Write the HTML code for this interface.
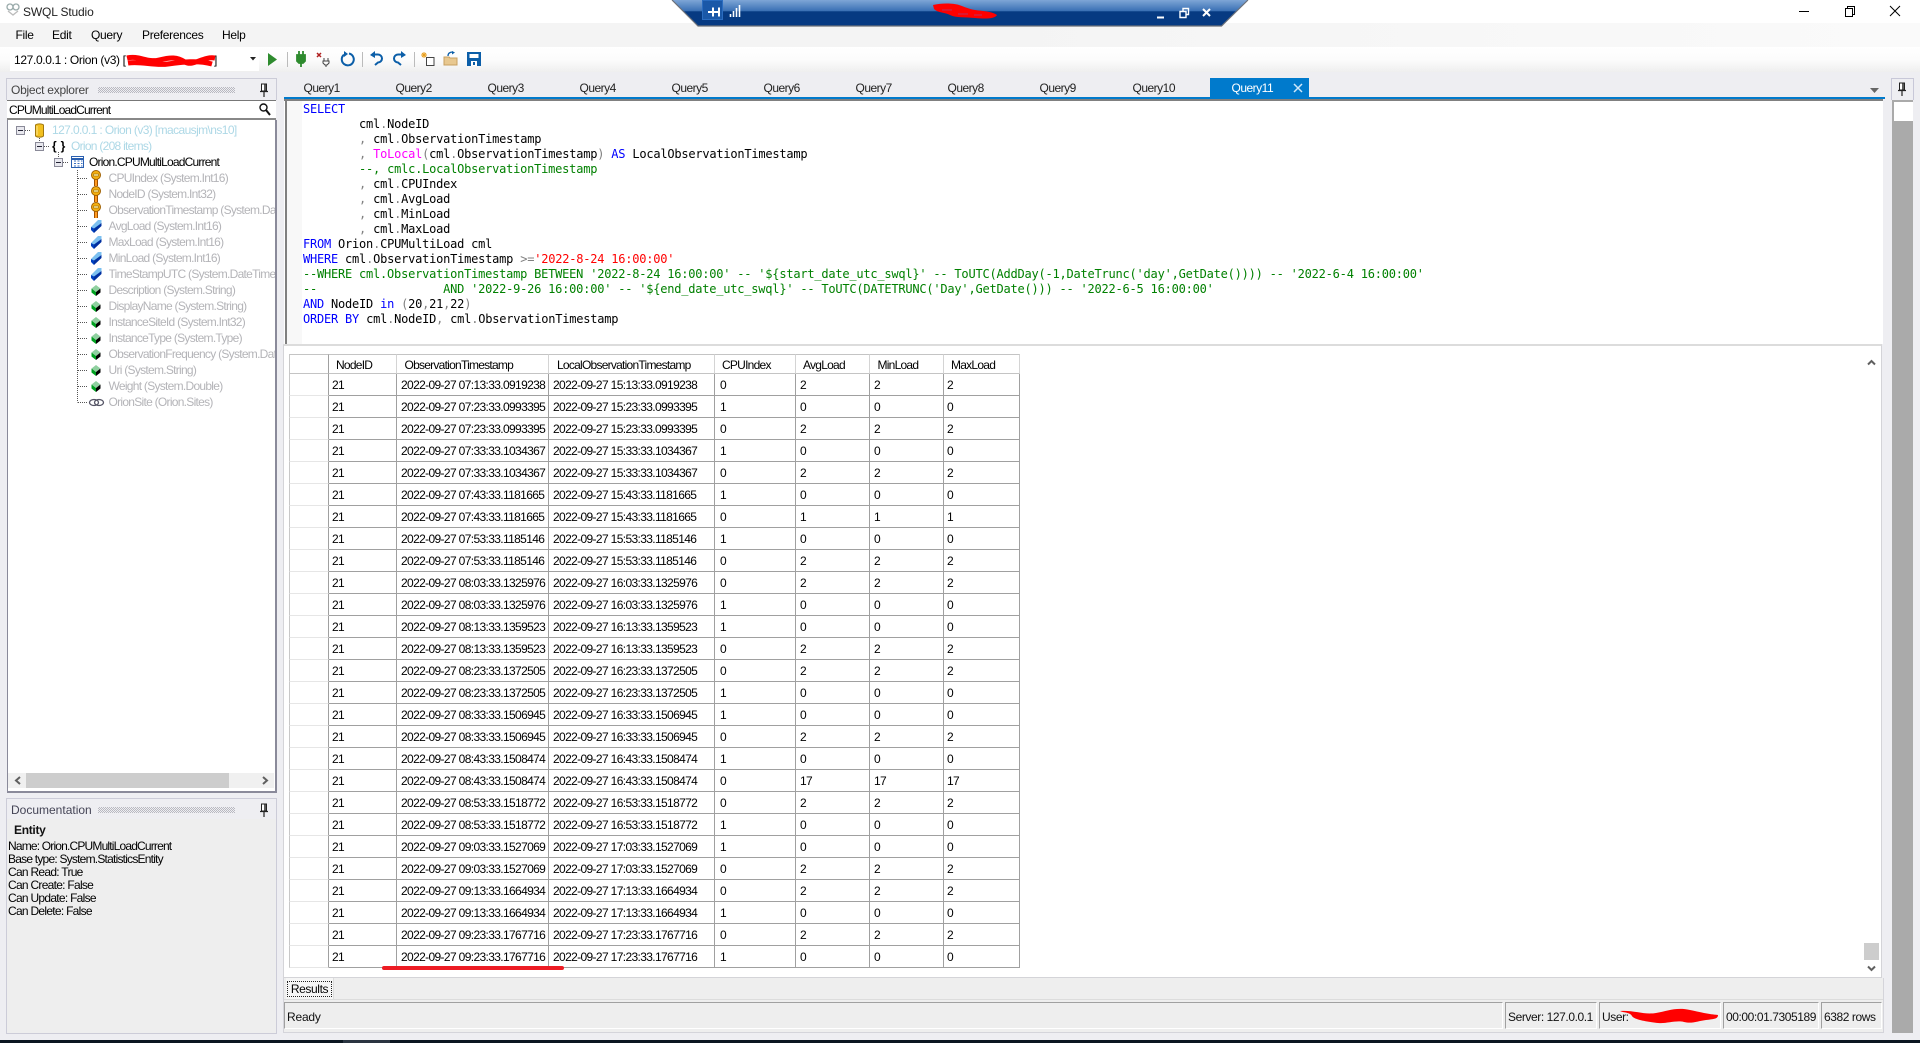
<!DOCTYPE html>
<html><head><meta charset="utf-8"><title>SWQL Studio</title>
<style>
html,body{margin:0;padding:0;width:1920px;height:1043px;overflow:hidden;background:#eeeef2}
body{position:relative;font:12px "Liberation Sans",sans-serif;color:#000;letter-spacing:-.6px}
.a{position:absolute;white-space:nowrap}
.t{position:absolute;white-space:nowrap;line-height:16px;height:16px}
.p{color:#b4b4b8;left:108.5px;letter-spacing:-.72px}
.q{color:#222;top:80px;letter-spacing:-.5px}
.d{left:8px;letter-spacing:-.72px}
svg{position:absolute;overflow:visible}
.grip{position:absolute;height:6px;background-image:repeating-conic-gradient(#b8b8c0 0 25%,transparent 0 50%);background-size:2px 2px}
.code{position:absolute;left:303px;white-space:pre;font:12px/15px "DejaVu Sans Mono",monospace;letter-spacing:-.22px;color:#000}
.code b{font-weight:normal;color:#00f}.code i{font-style:normal;color:#008000}.code u{text-decoration:none;color:#808080}.code s{text-decoration:none;color:#f0f}.code em{font-style:normal;color:#f00}
table{position:absolute;left:289px;top:354px;border-collapse:separate;border-spacing:0;table-layout:fixed;width:731px;background:#fff;letter-spacing:-.64px}
td,th{box-sizing:border-box;height:22px;padding:2px 0 0 4px;border-right:1px solid #a0a0a0;border-bottom:1px solid #a0a0a0;font-weight:normal;text-align:left;white-space:nowrap;overflow:hidden;line-height:19px}
th{height:20px;line-height:16px;padding-top:2px;border-top:1px solid #c4c4c4;border-right:1px solid #d4d4d4;border-bottom:1px solid #c4c4c4;padding-left:8px;letter-spacing:-.75px}
td:first-child,th:first-child{border-left:1px solid #c8c8c8;border-right:1px solid #a0a0a0;border-bottom:1px solid #e6e6e6;padding:0}
th:first-child{border-bottom:1px solid #c4c4c4}
td:nth-child(2){padding-left:3px}td:nth-child(5){padding-left:5px}td:nth-child(8){padding-left:3px}
.sb{position:absolute;top:1002px;height:27px;box-sizing:border-box;border:1px solid;border-color:#a0a0a0 #fff #fff #a0a0a0;padding:1px 0 0 2px;line-height:27px;letter-spacing:-.42px;color:#111}
</style></head>
<body>
<svg width="0" height="0" style="position:absolute"><defs>
<symbol id="key" viewBox="0 0 16 16"><path d="M8 9V16" stroke="#a05000" stroke-width="4"/><path d="M8 9V16" stroke="#ff9a20" stroke-width="2"/><circle cx="8" cy="5" r="4.5" fill="#f5b010" stroke="#a06000"/><rect x="5.5" y="4" width="5" height="2" fill="#fff0a0" stroke="#805000" stroke-width=".5"/></symbol>
<symbol id="col" viewBox="0 0 16 16"><path d="M3 9 10 2h3.500v3l-7.500 7z" fill="#7cc0f0"/><path d="M3 9l3 1.500V15l-3-3z" fill="#0040c0"/><path d="M6 10.500l7.500-5.500v3L6 15z" fill="#0030a0"/></symbol>
<symbol id="prop" viewBox="0 0 16 16"><path d="M8 3l4.500 3.500L8 10 3.500 6.500z" fill="#90d0a0"/><path d="M3.500 6.500 8 10v4l-4.500-3.500z" fill="#00a020"/><path d="M12.500 6.500 8 10v4l4.500-3.500z" fill="#000"/></symbol>
<symbol id="exp" viewBox="0 0 9 9"><rect x=".5" y=".5" width="8" height="8" fill="#e8e8ee" stroke="#8a8a98"/><path d="M2 4.5h5" stroke="#223" stroke-width="1"/></symbol>
<symbol id="pin" viewBox="0 0 10 14"><path d="M2.5 1h5v7h-5z" fill="#fff" stroke="#222"/><path d="M6 1.5v6" stroke="#222" stroke-width="1.5"/><path d="M1 8.5h8M5 8.5V14" stroke="#222" stroke-width="1.2"/></symbol>
</defs></svg>

<!-- title bar -->
<div class="a" style="left:0;top:0;width:1920px;height:23px;background:#fff"></div>
<svg style="left:6px;top:2px" width="14" height="14" viewBox="0 0 14 14"><circle cx="4" cy="5" r="3" fill="none" stroke="#9aa" stroke-width="1.3"/><circle cx="10" cy="5" r="3" fill="none" stroke="#9aa" stroke-width="1.3"/><path d="M2 9l5 4 5-4" fill="none" stroke="#bbb" stroke-width="1.3"/></svg>
<div class="t" style="left:23px;top:4px;font-size:12px;letter-spacing:-.15px;color:#222">SWQL Studio</div>
<svg style="left:1799px;top:4px" width="110" height="14" viewBox="0 0 110 14"><path d="M0 7.500h10" stroke="#000"/><path d="M46.500 4.500h7v8h-7zM48.500 4.500V2.500h7v8h-2" fill="none" stroke="#000"/><path d="M91 2l10 10M101 2 91 12" stroke="#000"/></svg>

<!-- menu bar -->
<div class="a" style="left:0;top:23px;width:1920px;height:24px;background:linear-gradient(90deg,#f4f4f4,#f4f4f4 50%,#fafafa)"></div>
<div class="t" style="left:15.5px;top:27px;letter-spacing:-.3px">File</div>
<div class="t" style="left:52px;top:27px;letter-spacing:-.3px">Edit</div>
<div class="t" style="left:91px;top:27px;letter-spacing:-.3px">Query</div>
<div class="t" style="left:142px;top:27px;letter-spacing:-.3px">Preferences</div>
<div class="t" style="left:222px;top:27px;letter-spacing:-.3px">Help</div>

<!-- toolbar -->
<div class="a" style="left:0;top:47px;width:1920px;height:25px;background:linear-gradient(#fff,#fcfcfc 50%,#efefef)"></div>
<div class="a" style="left:10px;top:48px;width:249px;height:23px;background:#fff"></div>
<div class="t" style="left:14px;top:52px;letter-spacing:-.35px">127.0.0.1 : Orion (v3) [</div>
<div class="t" style="left:214px;top:52px">]</div>
<svg style="left:125px;top:54px" width="92" height="14" viewBox="0 0 92 14"><path d="M2 4C14 1 22 9 34 6S52 3 60 8 78 2 90 4M3 9c14-2 26 3 40 1s30-4 44 0" fill="none" stroke="#f00" stroke-width="5"/></svg>
<svg style="left:250px;top:57px" width="6" height="4"><path d="M0 0h6L3 3.500z" fill="#222"/></svg>
<svg style="left:268px;top:53px" width="10" height="13"><path d="M0 0l9 6.500L0 13z" fill="#2e8b2e"/></svg>
<div class="a" style="left:287px;top:52px;width:1px;height:15px;background:#bbb"></div>
<svg style="left:296px;top:51px" width="10" height="16" viewBox="0 0 10 16"><path d="M3 0v4M7 0v4M1 4h8v6l-2 2H3L1 10zM5 12v4" stroke="#2e8b2e" stroke-width="1.800" fill="#2e8b2e"/></svg>
<svg style="left:317px;top:52px" width="14" height="15" viewBox="0 0 14 15"><path d="M0 1l4 4M4 1 0 5" stroke="#b02020" stroke-width="1.500"/><path d="M7 6v3M11 6v3M6 9h6v2l-2 2H8l-2-2zM9 13v2" stroke="#444" fill="none"/></svg>
<svg style="left:340px;top:51px" width="15" height="16" viewBox="0 0 15 16"><path d="M9 2.500a6 6 0 1 1-5 1.200" fill="none" stroke="#0b5ea8" stroke-width="2"/><path d="M4 0v6l4-3z" fill="#0b5ea8"/></svg>
<div class="a" style="left:362px;top:52px;width:1px;height:15px;background:#bbb"></div>
<svg style="left:370px;top:51px" width="13" height="15" viewBox="0 0 13 15"><path d="M3 3.500h5a4 4 0 0 1 0 8L5 14" fill="none" stroke="#0b5ea8" stroke-width="2"/><path d="M5 0 0 4l5 3z" fill="#0b5ea8"/></svg>
<svg style="left:393px;top:51px" width="13" height="15" viewBox="0 0 13 15"><path d="M10 3.500H5a4 4 0 0 0 0 8L8 14" fill="none" stroke="#0b5ea8" stroke-width="2"/><path d="M8 0l5 4-5 3z" fill="#0b5ea8"/></svg>
<div class="a" style="left:414px;top:52px;width:1px;height:15px;background:#bbb"></div>
<svg style="left:421px;top:52px" width="14" height="14" viewBox="0 0 14 14"><path d="M5.500 5.500H13v8H5.500z" fill="#fff" stroke="#444"/><path d="M3 0v6M0 3h6M1 1l4 4M5 1 1 5" stroke="#e8a020"/></svg>
<svg style="left:444px;top:51px" width="14" height="15" viewBox="0 0 14 15"><path d="M0 6h5l1 1h7v7H0z" fill="#e8c890" stroke="#c8a060"/><path d="M4 5c0-3 2-4 5-4" fill="none" stroke="#0b5ea8" stroke-width="1.300"/><path d="M8 0l3 1.500L8 3.500z" fill="#0b5ea8"/></svg>
<svg style="left:467px;top:52px" width="14" height="14" viewBox="0 0 14 14"><path d="M0 0h14v14H0z" fill="#0b5ea8"/><path d="M2.500 2h9v4h-9z" fill="#fff"/><path d="M4 9h6v5H4z" fill="#fff"/><path d="M6 10h2v3H6z" fill="#0b5ea8"/></svg>

<!-- remote bar -->
<svg style="left:672px;top:0" width="576" height="27" viewBox="0 0 576 27"><defs><linearGradient id="rb" x1="0" x2="0" y1="0" y2="1"><stop offset="0" stop-color="#7ea6d6"/><stop offset=".42" stop-color="#3a70b4"/><stop offset=".45" stop-color="#063a82"/><stop offset="1" stop-color="#063a82"/></linearGradient></defs><path d="M0 0H576L549.500 26H26z" fill="url(#rb)"/><path d="M0 0 26 26H549.500L576 0" fill="none" stroke="#6c7078" stroke-width="1.200"/></svg>
<div class="a" style="left:702px;top:0;width:21px;height:20px;background:#1a58a8;border:1px solid #2a6cc0;box-sizing:border-box"></div>
<svg style="left:708px;top:7px" width="13" height="10"><path d="M0 5h12M5 .5v9M11 .5v9" stroke="#fff" stroke-width="2"/></svg>
<svg style="left:730px;top:5px" width="11" height="12"><path d="M.5 9v3M3.500 6v6M6.500 3v9M9.500 0v12" stroke="#fff" stroke-width="1.600"/></svg>
<svg style="left:930px;top:3px" width="70" height="17" viewBox="0 0 70 17"><path d="M3 2c8-2 20-2 26 0s10 4 16 5 16 1 22 5c-2 4-12 4-22 3S26 15 20 12 8 10 4 6z" fill="#f00"/><path d="M12 7h10M28 11h10M44 12h8" stroke="#b83060"/></svg>
<svg style="left:1157px;top:8px" width="60" height="12"><path d="M0 9.500h7" stroke="#fff" stroke-width="2"/><path d="M23 3.500h6v6h-6zM26 3V.500h5.500v6H29" fill="none" stroke="#fff" stroke-width="1.400"/><path d="M46 1l7 7M53 1l-7 7" stroke="#fff" stroke-width="2"/></svg>

<!-- object explorer -->
<div class="a" style="left:6px;top:78px;width:271px;height:22px;border:1px solid #ccccd8;border-bottom:0;box-sizing:border-box;background:#eeeef2"></div>
<div class="t" style="left:11px;top:82px;letter-spacing:-.25px;color:#444">Object explorer</div>
<div class="grip" style="left:98px;top:87px;width:137px"></div>
<svg style="left:259px;top:83px" width="10" height="14"><use href="#pin"/></svg>
<div class="a" style="left:7px;top:100px;width:269px;height:20px;background:#fff;border-top:1px solid #777;border-bottom:2px solid #888;box-sizing:border-box"></div>
<div class="t" style="left:9px;top:102px;letter-spacing:-.85px">CPUMultiLoadCurrent</div>
<svg style="left:259px;top:103px" width="12" height="13"><circle cx="4.500" cy="4.500" r="3.500" fill="#fff" stroke="#111" stroke-width="1.400"/><path d="M7 7l4 5" stroke="#111" stroke-width="2"/></svg>
<div class="a" style="left:7px;top:120px;width:270px;height:673px;background:#fff;border:solid #8a8a9a;border-width:0 2px 2px 1px;box-sizing:border-box"></div>

<!-- tree lines -->
<svg style="left:0;top:0" width="300" height="420" stroke="#555" stroke-dasharray="1 1" fill="none">
<path d="M25 130.500h6M44 146.500h5M63 162.500h5M39.500 136v6M58.500 152v6M77.500 170V402.500M78 178.500h10M78 194.500h10M78 210.500h10M78 226.500h10M78 242.500h10M78 258.500h10M78 274.500h10M78 290.500h10M78 306.500h10M78 322.500h10M78 338.500h10M78 354.500h10M78 370.500h10M78 386.500h10M78 402.500h10"/></svg>
<svg style="left:16px;top:126px" width="9" height="9"><use href="#exp"/></svg>
<svg style="left:35px;top:142px" width="9" height="9"><use href="#exp"/></svg>
<svg style="left:54px;top:158px" width="9" height="9"><use href="#exp"/></svg>
<svg style="left:35px;top:123px" width="9" height="15"><path d="M.5 2C2 .5 7 .5 8.500 2v11c-1.500 1.500-6.500 1.500-8 0z" fill="#f2c020" stroke="#a07810"/><path d="M2 3v9" stroke="#ffe890"/></svg>
<div class="t" style="left:52px;top:122px;color:#add8e6">127.0.0.1 : Orion (v3) [macausjm\ns10]</div>
<div class="t" style="left:52px;top:138px;font-size:12px;font-weight:bold;letter-spacing:.3px">{ }</div>
<div class="t" style="left:71px;top:138px;color:#add8e6;letter-spacing:-.72px">Orion (208 items)</div>
<svg style="left:71px;top:156px" width="13" height="12"><rect x=".5" y=".5" width="12" height="11" fill="#fff" stroke="#2a5fb0"/><path d="M.5 3h12" stroke="#2a5fb0" stroke-width="2"/><path d="M3 5h2M6.500 5h2M10 5h1.500M3 7.500h2M6.500 7.500h2M10 7.500h1.500M3 10h2M6.500 10h2M10 10h1.500" stroke="#3a6fc0"/></svg>
<div class="t" style="left:89px;top:154px;letter-spacing:-.8px">Orion.CPUMultiLoadCurrent</div>

<svg style="left:88px;top:170px" width="16" height="16"><use href="#key"/></svg>
<div class="t p" style="top:170px">CPUIndex (System.Int16)</div>
<svg style="left:88px;top:186px" width="16" height="16"><use href="#key"/></svg>
<div class="t p" style="top:186px">NodeID (System.Int32)</div>
<svg style="left:88px;top:202px" width="16" height="16"><use href="#key"/></svg>
<div class="t p" style="top:202px;width:166px;overflow:hidden">ObservationTimestamp (System.DateTime)</div>
<svg style="left:88px;top:218px" width="16" height="16"><use href="#col"/></svg>
<div class="t p" style="top:218px">AvgLoad (System.Int16)</div>
<svg style="left:88px;top:234px" width="16" height="16"><use href="#col"/></svg>
<div class="t p" style="top:234px">MaxLoad (System.Int16)</div>
<svg style="left:88px;top:250px" width="16" height="16"><use href="#col"/></svg>
<div class="t p" style="top:250px">MinLoad (System.Int16)</div>
<svg style="left:88px;top:266px" width="16" height="16"><use href="#col"/></svg>
<div class="t p" style="top:266px;width:166px;overflow:hidden">TimeStampUTC (System.DateTime)</div>
<svg style="left:88px;top:282px" width="16" height="16"><use href="#prop"/></svg>
<div class="t p" style="top:282px">Description (System.String)</div>
<svg style="left:88px;top:298px" width="16" height="16"><use href="#prop"/></svg>
<div class="t p" style="top:298px">DisplayName (System.String)</div>
<svg style="left:88px;top:314px" width="16" height="16"><use href="#prop"/></svg>
<div class="t p" style="top:314px">InstanceSiteId (System.Int32)</div>
<svg style="left:88px;top:330px" width="16" height="16"><use href="#prop"/></svg>
<div class="t p" style="top:330px">InstanceType (System.Type)</div>
<svg style="left:88px;top:346px" width="16" height="16"><use href="#prop"/></svg>
<div class="t p" style="top:346px;width:166px;overflow:hidden">ObservationFrequency (System.DateTime)</div>
<svg style="left:88px;top:362px" width="16" height="16"><use href="#prop"/></svg>
<div class="t p" style="top:362px">Uri (System.String)</div>
<svg style="left:88px;top:378px" width="16" height="16"><use href="#prop"/></svg>
<div class="t p" style="top:378px">Weight (System.Double)</div>
<svg style="left:89px;top:398px" width="15" height="9"><ellipse cx="5" cy="4.500" rx="4.500" ry="3" fill="none" stroke="#556" stroke-width="1.300"/><ellipse cx="10" cy="4.500" rx="4.500" ry="3" fill="none" stroke="#556" stroke-width="1.300"/></svg>
<div class="t p" style="top:394px">OrionSite (Orion.Sites)</div>

<!-- h scroll -->
<div class="a" style="left:8px;top:773px;width:266px;height:15px;background:#f0f0f0"></div>
<div class="a" style="left:26px;top:773px;width:203px;height:15px;background:#cdcdcd"></div>
<svg style="left:14px;top:776px" width="256" height="9"><path d="M6 1 2 4.500 6 8" fill="none" stroke="#606060" stroke-width="2"/><path d="M249 1l4 3.500L249 8" fill="none" stroke="#606060" stroke-width="2"/></svg>

<!-- documentation -->
<div class="a" style="left:6px;top:798px;width:271px;height:236px;background:#eee;border:1px solid #ccccd8;box-sizing:border-box"></div>
<div class="a" style="left:7px;top:799px;width:269px;height:20px;background:#eeeef2"></div>
<div class="t" style="left:11px;top:802px;letter-spacing:0;color:#444456">Documentation</div>
<div class="grip" style="left:98px;top:807px;width:137px"></div>
<svg style="left:259px;top:803px" width="10" height="14"><use href="#pin"/></svg>
<div class="t" style="left:14px;top:822px;font-weight:bold;color:#111;letter-spacing:-.3px">Entity</div>
<div class="t d" style="top:838px;letter-spacing:-.82px">Name: Orion.CPUMultiLoadCurrent</div>
<div class="t d" style="top:851px;letter-spacing:-.78px">Base type: System.StatisticsEntity</div>
<div class="t d" style="top:864px">Can Read: True</div>
<div class="t d" style="top:877px">Can Create: False</div>
<div class="t d" style="top:890px">Can Update: False</div>
<div class="t d" style="top:903px">Can Delete: False</div>

<!-- tabs -->
<div class="t q" style="left:303.5px">Query1</div>
<div class="t q" style="left:395.5px">Query2</div>
<div class="t q" style="left:487.5px">Query3</div>
<div class="t q" style="left:579.5px">Query4</div>
<div class="t q" style="left:671.5px">Query5</div>
<div class="t q" style="left:763.5px">Query6</div>
<div class="t q" style="left:855.5px">Query7</div>
<div class="t q" style="left:947.5px">Query8</div>
<div class="t q" style="left:1039.5px">Query9</div>
<div class="t q" style="left:1132.5px">Query10</div>
<div class="a" style="left:1210px;top:78px;width:99px;height:19px;background:#007acc"></div>
<div class="t q" style="left:1231.5px;color:#fff">Query11</div>
<svg style="left:1293px;top:83px" width="10" height="10"><path d="M1 1l8 8M9 1 1 9" stroke="#cfe8fa" stroke-width="1.500"/></svg>
<svg style="left:1870px;top:88px" width="9" height="5"><path d="M0 0h9L4.500 5z" fill="#666"/></svg>
<div class="a" style="left:284px;top:97px;width:1601px;height:2px;background:#007acc"></div>
<div class="a" style="left:1891px;top:78px;width:23px;height:22px;border:1px solid #c8c8d8;border-bottom:0;box-sizing:border-box"></div>
<svg style="left:1897px;top:82px" width="10" height="14"><use href="#pin"/></svg>
<div class="a" style="left:1892px;top:100px;width:21px;height:933px;background:#aaa"></div>
<div class="a" style="left:1893.5px;top:102px;width:19px;height:19px;background:#fff"></div>

<!-- editor -->
<div class="a" style="left:284px;top:99px;width:1599px;height:245px;background:#fff;border-top:2px solid #808080;box-sizing:border-box"></div>
<div class="a" style="left:285px;top:101px;width:2px;height:243px;background:#808080"></div>
<div class="a" style="left:287px;top:101px;width:15px;height:243px;background:#f8f8f8"></div>
<div class="code" style="top:101.5px"><b>SELECT</b>
        cml<u>.</u>NodeID
        <u>,</u> cml<u>.</u>ObservationTimestamp
        <u>,</u> <s>ToLocal</s><u>(</u>cml<u>.</u>ObservationTimestamp<u>)</u> <b>AS</b> LocalObservationTimestamp
        <i>--, cmlc.LocalObservationTimestamp</i>
        <u>,</u> cml<u>.</u>CPUIndex
        <u>,</u> cml<u>.</u>AvgLoad
        <u>,</u> cml<u>.</u>MinLoad
        <u>,</u> cml<u>.</u>MaxLoad
<b>FROM</b> Orion<u>.</u>CPUMultiLoad cml
<b>WHERE</b> cml<u>.</u>ObservationTimestamp <u>&gt;=</u><em>'2022-8-24 16:00:00'</em>
<i>--WHERE cml.ObservationTimestamp BETWEEN '2022-8-24 16:00:00' -- '${start_date_utc_swql}' -- ToUTC(AddDay(-1,DateTrunc('day',GetDate()))) -- '2022-6-4 16:00:00'</i>
<i>--                  AND '2022-9-26 16:00:00' -- '${end_date_utc_swql}' -- ToUTC(DATETRUNC('Day',GetDate())) -- '2022-6-5 16:00:00'</i>
<b>AND</b> NodeID <b>in</b> <u>(</u>20<u>,</u>21<u>,</u>22<u>)</u>
<b>ORDER</b> <b>BY</b> cml<u>.</u>NodeID<u>,</u> cml<u>.</u>ObservationTimestamp</div>

<!-- results pane -->
<div class="a" style="left:283px;top:344px;width:1599px;height:634px;background:#fff;border:1px solid #d4d4d8;border-top:2px solid #dcdcdc;box-sizing:border-box"></div>
<table>
<colgroup><col style="width:40px"><col style="width:68px"><col style="width:152px"><col style="width:166px"><col style="width:81px"><col style="width:74px"><col style="width:74px"><col style="width:76px"></colgroup>
<tr><th></th><th style="padding-left:7px">NodeID</th><th style="padding-left:7.5px">ObservationTimestamp</th><th>LocalObservationTimestamp</th><th style="padding-left:7px">CPUIndex</th><th style="padding-left:7px">AvgLoad</th><th style="padding-left:7.5px">MinLoad</th><th style="padding-left:7px">MaxLoad</th></tr>
<tr><td></td><td>21</td><td>2022-09-27 07:13:33.0919238</td><td>2022-09-27 15:13:33.0919238</td><td>0</td><td>2</td><td>2</td><td>2</td></tr>
<tr><td></td><td>21</td><td>2022-09-27 07:23:33.0993395</td><td>2022-09-27 15:23:33.0993395</td><td>1</td><td>0</td><td>0</td><td>0</td></tr>
<tr><td></td><td>21</td><td>2022-09-27 07:23:33.0993395</td><td>2022-09-27 15:23:33.0993395</td><td>0</td><td>2</td><td>2</td><td>2</td></tr>
<tr><td></td><td>21</td><td>2022-09-27 07:33:33.1034367</td><td>2022-09-27 15:33:33.1034367</td><td>1</td><td>0</td><td>0</td><td>0</td></tr>
<tr><td></td><td>21</td><td>2022-09-27 07:33:33.1034367</td><td>2022-09-27 15:33:33.1034367</td><td>0</td><td>2</td><td>2</td><td>2</td></tr>
<tr><td></td><td>21</td><td>2022-09-27 07:43:33.1181665</td><td>2022-09-27 15:43:33.1181665</td><td>1</td><td>0</td><td>0</td><td>0</td></tr>
<tr><td></td><td>21</td><td>2022-09-27 07:43:33.1181665</td><td>2022-09-27 15:43:33.1181665</td><td>0</td><td>1</td><td>1</td><td>1</td></tr>
<tr><td></td><td>21</td><td>2022-09-27 07:53:33.1185146</td><td>2022-09-27 15:53:33.1185146</td><td>1</td><td>0</td><td>0</td><td>0</td></tr>
<tr><td></td><td>21</td><td>2022-09-27 07:53:33.1185146</td><td>2022-09-27 15:53:33.1185146</td><td>0</td><td>2</td><td>2</td><td>2</td></tr>
<tr><td></td><td>21</td><td>2022-09-27 08:03:33.1325976</td><td>2022-09-27 16:03:33.1325976</td><td>0</td><td>2</td><td>2</td><td>2</td></tr>
<tr><td></td><td>21</td><td>2022-09-27 08:03:33.1325976</td><td>2022-09-27 16:03:33.1325976</td><td>1</td><td>0</td><td>0</td><td>0</td></tr>
<tr><td></td><td>21</td><td>2022-09-27 08:13:33.1359523</td><td>2022-09-27 16:13:33.1359523</td><td>1</td><td>0</td><td>0</td><td>0</td></tr>
<tr><td></td><td>21</td><td>2022-09-27 08:13:33.1359523</td><td>2022-09-27 16:13:33.1359523</td><td>0</td><td>2</td><td>2</td><td>2</td></tr>
<tr><td></td><td>21</td><td>2022-09-27 08:23:33.1372505</td><td>2022-09-27 16:23:33.1372505</td><td>0</td><td>2</td><td>2</td><td>2</td></tr>
<tr><td></td><td>21</td><td>2022-09-27 08:23:33.1372505</td><td>2022-09-27 16:23:33.1372505</td><td>1</td><td>0</td><td>0</td><td>0</td></tr>
<tr><td></td><td>21</td><td>2022-09-27 08:33:33.1506945</td><td>2022-09-27 16:33:33.1506945</td><td>1</td><td>0</td><td>0</td><td>0</td></tr>
<tr><td></td><td>21</td><td>2022-09-27 08:33:33.1506945</td><td>2022-09-27 16:33:33.1506945</td><td>0</td><td>2</td><td>2</td><td>2</td></tr>
<tr><td></td><td>21</td><td>2022-09-27 08:43:33.1508474</td><td>2022-09-27 16:43:33.1508474</td><td>1</td><td>0</td><td>0</td><td>0</td></tr>
<tr><td></td><td>21</td><td>2022-09-27 08:43:33.1508474</td><td>2022-09-27 16:43:33.1508474</td><td>0</td><td>17</td><td>17</td><td>17</td></tr>
<tr><td></td><td>21</td><td>2022-09-27 08:53:33.1518772</td><td>2022-09-27 16:53:33.1518772</td><td>0</td><td>2</td><td>2</td><td>2</td></tr>
<tr><td></td><td>21</td><td>2022-09-27 08:53:33.1518772</td><td>2022-09-27 16:53:33.1518772</td><td>1</td><td>0</td><td>0</td><td>0</td></tr>
<tr><td></td><td>21</td><td>2022-09-27 09:03:33.1527069</td><td>2022-09-27 17:03:33.1527069</td><td>1</td><td>0</td><td>0</td><td>0</td></tr>
<tr><td></td><td>21</td><td>2022-09-27 09:03:33.1527069</td><td>2022-09-27 17:03:33.1527069</td><td>0</td><td>2</td><td>2</td><td>2</td></tr>
<tr><td></td><td>21</td><td>2022-09-27 09:13:33.1664934</td><td>2022-09-27 17:13:33.1664934</td><td>0</td><td>2</td><td>2</td><td>2</td></tr>
<tr><td></td><td>21</td><td>2022-09-27 09:13:33.1664934</td><td>2022-09-27 17:13:33.1664934</td><td>1</td><td>0</td><td>0</td><td>0</td></tr>
<tr><td></td><td>21</td><td>2022-09-27 09:23:33.1767716</td><td>2022-09-27 17:23:33.1767716</td><td>0</td><td>2</td><td>2</td><td>2</td></tr>
<tr><td></td><td>21</td><td>2022-09-27 09:23:33.1767716</td><td>2022-09-27 17:23:33.1767716</td><td>1</td><td>0</td><td>0</td><td>0</td></tr>
</table>
<div class="a" style="left:382px;top:966px;width:182px;height:4px;border-radius:2px;background:#ed1c24"></div>
<!-- results v-scroll -->
<svg style="left:1867px;top:359px" width="9" height="7"><path d="M1 5.500 4.500 2 8 5.500" fill="none" stroke="#606060" stroke-width="2"/></svg>
<div class="a" style="left:1864px;top:943px;width:15px;height:17px;background:#cdcdcd"></div>
<svg style="left:1867px;top:965px" width="9" height="7"><path d="M1 1.500 4.500 5 8 1.500" fill="none" stroke="#606060" stroke-width="2"/></svg>

<!-- lower strip -->
<div class="a" style="left:283px;top:978px;width:1601px;height:55px;background:#eee;border:1px solid #d4d4da;border-top:0;box-sizing:border-box"></div>
<div class="a" style="left:284px;top:999px;width:1599px;height:1px;background:#dcdcdc"></div>
<div class="a" style="left:286px;top:978px;width:48px;height:21px;background:#f6f6f6;border-right:1px solid #ddd;box-sizing:border-box"></div>
<div class="a" style="left:287px;top:981px;width:45px;height:16px;border:1px dotted #222;box-sizing:border-box;text-align:center;line-height:15px;letter-spacing:-.4px">Results</div>
<div class="sb" style="left:284px;width:1219px;letter-spacing:-.2px">Ready</div>
<div class="sb" style="left:1505px;width:92px">Server: 127.0.0.1</div>
<div class="sb" style="left:1599px;width:122px">User:</div>
<svg style="left:1618px;top:1008px" width="102" height="17" viewBox="0 0 102 17"><path d="M2 3c14-1 24 4 36 2S58-1 72 2s18 4 28 5c0 4-4 4-12 5s-14 4-22 2-18 2-26 1S16 12 14 8 6 5 2 3z" fill="#f00"/></svg>
<div class="sb" style="left:1723px;width:96px">00:00:01.7305189</div>
<div class="sb" style="left:1821px;width:61px">6382 rows</div>

<!-- taskbar sliver -->
<div class="a" style="left:0;top:1040px;width:1920px;height:3px;background:#0b1620"></div>
<div class="a" style="left:343px;top:1040px;width:47px;height:3px;background:#2a3440"></div>
</body></html>
